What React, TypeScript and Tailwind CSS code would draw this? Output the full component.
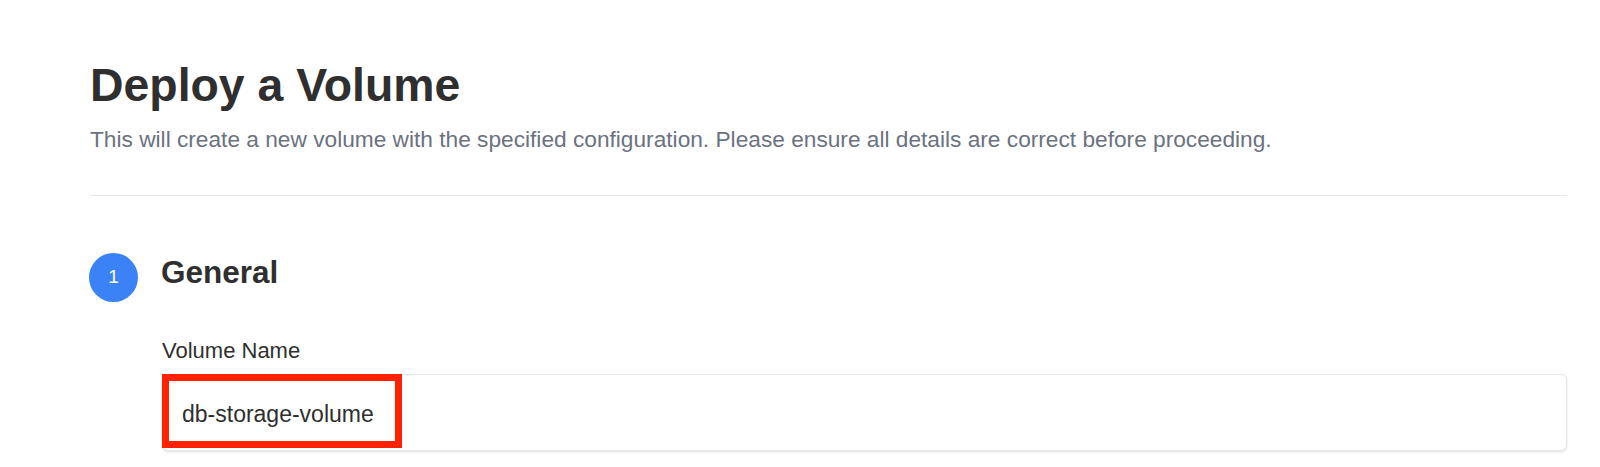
import React from "react";

const App = () => {
  return (
    <div className="min-h-[467px] bg-white font-['Liberation_Sans',Arial,sans-serif] pl-[90px] pr-[33px] pt-[57px]">
      <h1 className="text-[46.4px] leading-[56px] font-bold text-[#2f2f2f]">Deploy a Volume</h1>
      <p className="mt-[10px] text-[22.7px] leading-[32px] text-[#6b7280]">
        This will create a new volume with the specified configuration. Please ensure all details are
        correct before proceeding.
      </p>
      <div className="mt-[40px] h-px bg-[#e5e7eb]" />

      {/* step 1 */}
      <div className="mt-[57px] flex items-start">
        <div className="ml-[-1px] flex h-[49px] w-[49px] items-center justify-center rounded-full bg-[#3b82f6] text-[19px] text-white">
          1
        </div>
        <h2 className="ml-[23px] mt-[1px] text-[31.5px] leading-[36px] font-bold text-[#2f2f2f]">General</h2>
      </div>

      <div className="pl-[72px]">
        <label className="mt-[35px] block text-[22px] leading-[28px] text-[#2f2f2f]">Volume Name</label>
        <div className="relative mt-[9px]">
          <div className="flex h-[77px] items-center rounded-md border border-[#e5e7eb] bg-white pl-[19px] pt-[3px] text-[23px] text-[#2f2f2f] shadow-sm">
            db-storage-volume
          </div>
          <div className="absolute left-0 top-0 h-[74px] w-[240px] border-[7px] border-[#ff2200]" />
        </div>
      </div>
    </div>
  );
};

export default App;
